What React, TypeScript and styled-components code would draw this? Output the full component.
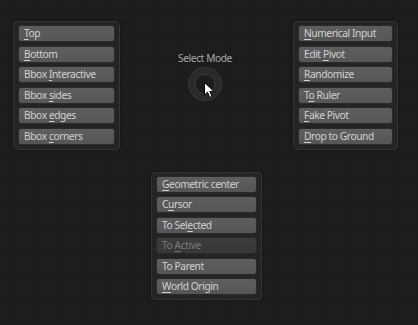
import React from "react";
import styled, { createGlobalStyle } from "styled-components";

const GlobalStyle = createGlobalStyle`
  html, body {
    margin: 0;
    padding: 0;
    background: #1c1c1c;
  }
  body {
    font-family: "Noto Sans", "DejaVu Sans", sans-serif;
  }
`;

const Page = styled.div`
  width: 418px;
  height: 325px;
  box-sizing: border-box;
  padding: 21px 20px 0 13px;
  background-color: #1c1c1c;
  background-image: radial-gradient(rgba(255, 255, 255, 0.025) 0.6px, transparent 0.8px);
  background-size: 3px 3px;
  display: flex;
  flex-direction: column;
  gap: 22px;
  overflow: hidden;
`;

const TopRow = styled.div`
  display: flex;
  align-items: flex-start;
`;

const BottomRow = styled.div`
  display: flex;
  justify-content: center;
  padding-left: 2px;
`;

const Panel = styled.div<{ $width: number }>`
  width: ${(p) => p.$width}px;
  box-sizing: border-box;
  display: flex;
  flex-direction: column;
  gap: 3.5px;
  padding: 3px 4px 4px 4px;
  background: #242424;
  border: 1px solid #353535;
  border-radius: 4px;
  box-shadow: 0 0 2px rgba(0, 0, 0, 0.6);
`;

const Button = styled.div<{ $disabled?: boolean }>`
  height: 17px;
  box-sizing: border-box;
  display: flex;
  align-items: center;
  padding: 0 0 1px 5px;
  border: 1px solid #2a2a2a;
  border-radius: 3px;
  font-size: 10.2px;
  letter-spacing: -0.4px;
  white-space: pre;
  color: ${(p) => (p.$disabled ? "#7a7a7a" : "#d2d2d2")};
  background: ${(p) =>
    p.$disabled
      ? "linear-gradient(#3c3c3c, #373737)"
      : "linear-gradient(#5e5e5e, #565656)"};
`;

const Label = styled.span`
  display: block;
`;

const Key = styled.span`
  text-decoration: underline;
  text-underline-offset: 2px;
`;

const Center = styled.div`
  flex: 1;
  display: flex;
  flex-direction: column;
  align-items: center;
  padding-top: 31px;
`;

const ModeLabel = styled.div`
  font-size: 10.2px;
  letter-spacing: -0.4px;
  color: #a8a8a8;
  line-height: 12px;
  margin-left: -3px;
`;

const Ring = styled.div`
  position: relative;
  width: 34px;
  height: 34px;
  margin-top: 3px;
  margin-left: -3px;
`;

const Pointer = styled.svg`
  position: absolute;
  left: 16px;
  top: 15px;
`;

type Item = { pre: string; key?: string; post?: string; disabled?: boolean };

const left: Item[] = [
  { pre: "", key: "T", post: "op" },
  { pre: "", key: "B", post: "ottom" },
  { pre: "Bbox ", key: "I", post: "nteractive" },
  { pre: "Bbox ", key: "s", post: "ides" },
  { pre: "Bbox ", key: "e", post: "dges" },
  { pre: "Bbox ", key: "c", post: "orners" },
];

const right: Item[] = [
  { pre: "", key: "N", post: "umerical Input" },
  { pre: "Edit ", key: "P", post: "ivot" },
  { pre: "", key: "R", post: "andomize" },
  { pre: "T", key: "o", post: " Ruler" },
  { pre: "", key: "F", post: "ake Pivot" },
  { pre: "", key: "D", post: "rop to Ground" },
];

const bottom: Item[] = [
  { pre: "", key: "G", post: "eometric center" },
  { pre: "C", key: "u", post: "rsor" },
  { pre: "To Sel", key: "e", post: "cted" },
  { pre: "To ", key: "A", post: "ctive", disabled: true },
  { pre: "To Parent" },
  { pre: "", key: "W", post: "orld Origin" },
];

const Menu = ({ items, width }: { items: Item[]; width: number }) => (
  <Panel $width={width}>
    {items.map((it, i) => (
      <Button key={i} $disabled={it.disabled}>
        <Label>
          {it.pre}
          {it.key && <Key>{it.key}</Key>}
          {it.post}
        </Label>
      </Button>
    ))}
  </Panel>
);

export default function App() {
  return (
    <>
      <GlobalStyle />
      <Page>
        <TopRow>
          <Menu items={left} width={107} />
          <Center>
            <ModeLabel>Select Mode</ModeLabel>
            <Ring>
              <svg width="34" height="34" viewBox="0 0 34 34">
                <circle cx="17" cy="17" r="13.5" fill="none" stroke="#292929" strokeWidth="7" />
                <circle cx="17" cy="17" r="16.5" fill="none" stroke="#363636" strokeWidth="1" />
                <circle cx="17" cy="17" r="10" fill="none" stroke="#3c3c3c" strokeWidth="1" />
              </svg>
              <Pointer width="12" height="17" viewBox="0 0 12 17">
                <path
                  d="M0.5 0.5 L0.5 13 L3.5 10.2 L5.8 15.5 L8 14.5 L5.8 9.4 L10 9.4 Z"
                  fill="#ffffff"
                  stroke="#000000"
                  strokeWidth="1"
                  strokeLinejoin="round"
                />
              </Pointer>
            </Ring>
          </Center>
          <Menu items={right} width={105} />
        </TopRow>
        <BottomRow>
          <Menu items={bottom} width={111} />
        </BottomRow>
      </Page>
    </>
  );
}
